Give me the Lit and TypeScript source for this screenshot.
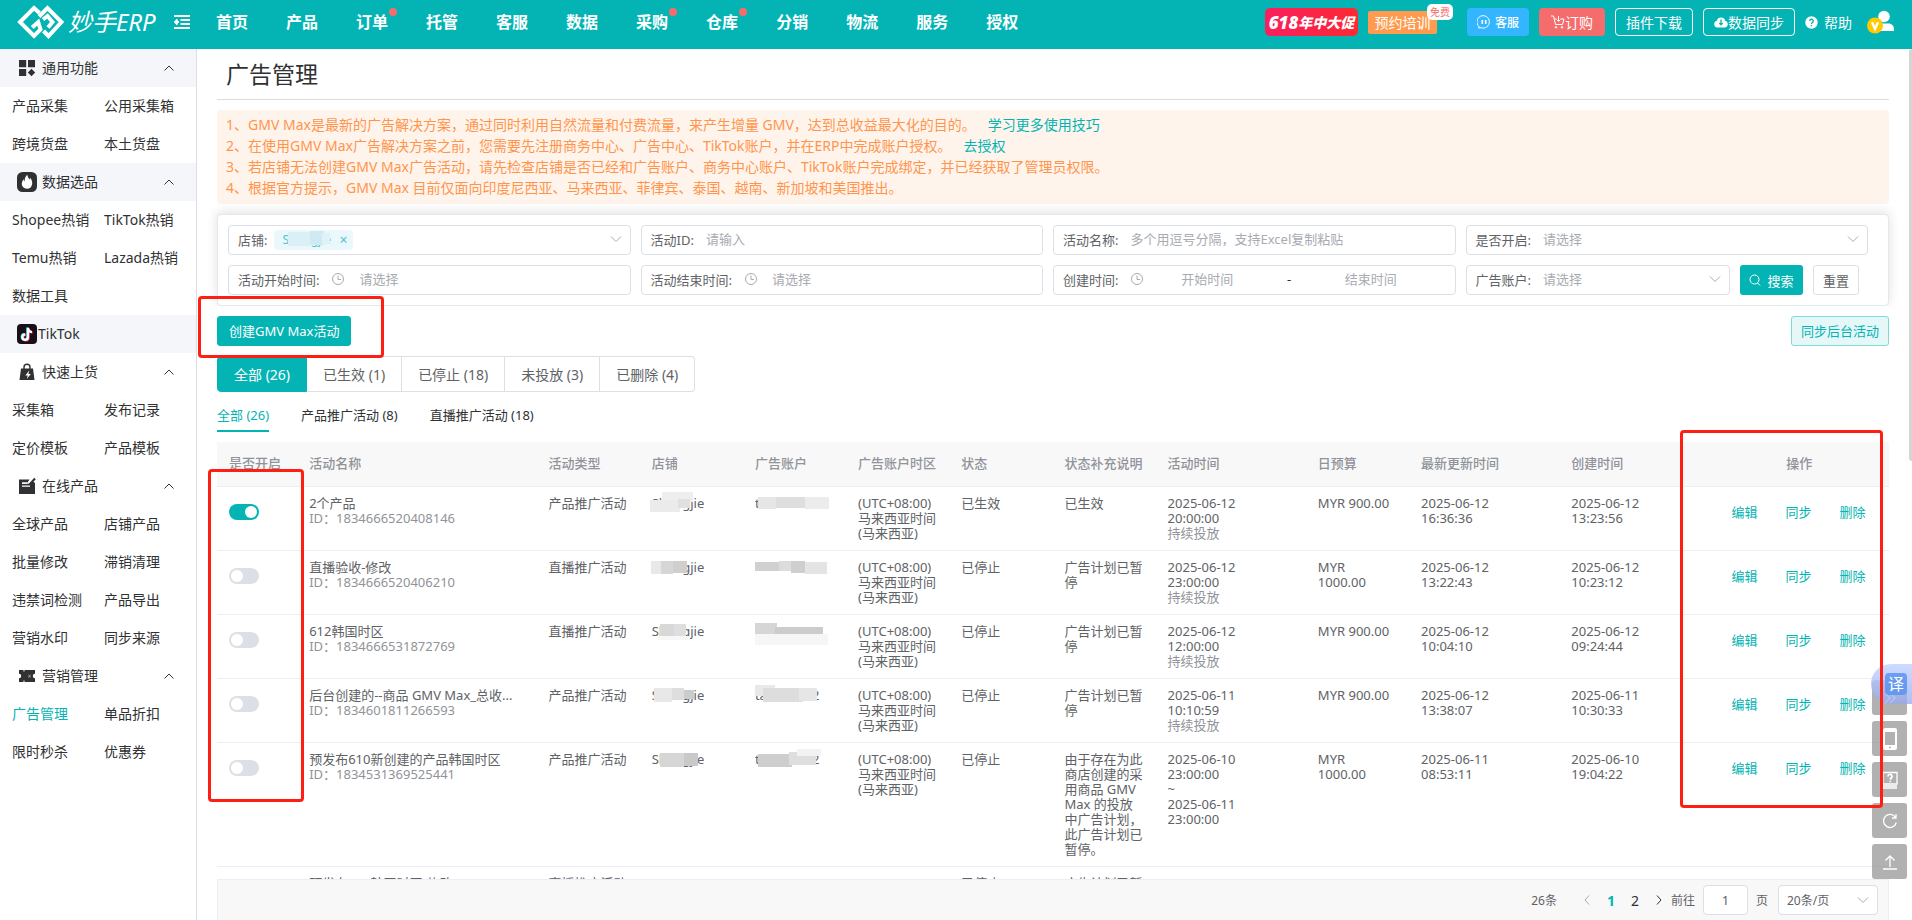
import { LitElement, html, css, svg, nothing } from "lit";
import { customElement, property } from "lit/decorators.js";

type Block = [number, number, number, number, string];

interface Row {
  on: boolean;
  name: string;
  id: string;
  type: string;
  shop: string;
  shopMask: Block[];
  account: string;
  accountMask: Block[];
  status: string;
  note: string;
  time: string;
  lasting: boolean;
  budget: string;
  updated: string;
  created: string;
}

const rows: Row[] = [
  {
    on: true, name: "2个产品", id: "1834666520408146", type: "产品推广活动",
    shop: "Shengjie",
    shopMask: [[10, 0, 31, 10, "#eeeeee"], [-2, 8, 30, 12, "#ebebeb"], [26, 7, 12, 9, "#e0e0e0"]],
    account: "t",
    accountMask: [[3, 5, 18, 12, "#e6e6e6"], [21, 5, 34, 11, "#dedede"], [50, 5, 24, 12, "#ececec"]],
    status: "已生效", note: "已生效", time: "2025-06-12\n20:00:00", lasting: true,
    budget: "MYR 900.00", updated: "2025-06-12\n16:36:36", created: "2025-06-12\n13:23:56",
  },
  {
    on: false, name: "直播验收-修改", id: "1834666520406210", type: "直播推广活动",
    shop: "Shengjie",
    shopMask: [[-1, 5, 10, 13, "#e8e8e8"], [9, 5, 12, 13, "#d6d6d6"], [21, 5, 14, 12, "#cfcfcf"]],
    account: "",
    accountMask: [[0, 6, 24, 9, "#d0d0d0"], [24, 5, 14, 10, "#dcdcdc"], [36, 5, 14, 12, "#cfcfcf"], [50, 6, 22, 12, "#e4e4e4"]],
    status: "已停止", note: "广告计划已暂停", time: "2025-06-12\n23:00:00", lasting: true,
    budget: "MYR\n1000.00", updated: "2025-06-12\n13:22:43", created: "2025-06-12\n10:23:12",
  },
  {
    on: false, name: "612韩国时区", id: "1834666531872769", type: "直播推广活动",
    shop: "Shengjie",
    shopMask: [[8, 4, 14, 13, "#d8d8d8"], [22, 4, 12, 13, "#dedede"], [6, 16, 32, 4, "#f7f7f7"]],
    account: "tan000002",
    accountMask: [[0, 3, 22, 11, "#d6d6d6"], [20, 7, 48, 8, "#cccccc"], [0, 14, 73, 11, "#f6f6f6"]],
    status: "已停止", note: "广告计划已暂停", time: "2025-06-12\n12:00:00", lasting: true,
    budget: "MYR 900.00", updated: "2025-06-12\n10:04:10", created: "2025-06-12\n09:24:44",
  },
  {
    on: false, name: "后台创建的--商品 GMV Max_总收...", id: "1834601811266593", type: "产品推广活动",
    shop: "Shengjie",
    shopMask: [[2, 4, 18, 14, "#e8e8e8"], [20, 4, 12, 12, "#dedede"], [32, 6, 10, 9, "#cccccc"]],
    account: "tan000002",
    accountMask: [[0, 1, 20, 11, "#e9e9e9"], [8, 4, 40, 14, "#dddddd"], [44, 4, 18, 13, "#e6e6e6"]],
    status: "已停止", note: "广告计划已暂停", time: "2025-06-11\n10:10:59", lasting: true,
    budget: "MYR 900.00", updated: "2025-06-12\n13:38:07", created: "2025-06-11\n10:30:33",
  },
  {
    on: false, name: "预发布610新创建的产品韩国时区", id: "1834531369525441", type: "产品推广活动",
    shop: "Shengjie",
    shopMask: [[8, 5, 24, 14, "#d6d6d6"], [32, 5, 14, 13, "#c9c9c9"]],
    account: "tan000002",
    accountMask: [[3, 6, 34, 13, "#cecece"], [34, 4, 27, 13, "#dedede"], [42, 1, 24, 7, "#f2f2f2"]],
    status: "已停止", note: "由于存在为此\n商店创建的采\n用商品 GMV\nMax 的投放\n中广告计划，\n此广告计划已\n暂停。",
    time: "2025-06-10\n23:00:00\n~\n2025-06-11\n23:00:00", lasting: false,
    budget: "MYR\n1000.00", updated: "2025-06-11\n08:53:11", created: "2025-06-10\n19:04:22",
  },
  {
    on: false, name: "预发布610韩国时区-修改", id: "1834531369525442", type: "直播推广活动",
    shop: "", shopMask: [], account: "", accountMask: [],
    status: "已停止", note: "广告计划已暂停", time: "", lasting: false,
    budget: "", updated: "", created: "",
  },
];

const chevronUp = html`<svg width="12" height="8" viewBox="0 0 12 8" fill="none" stroke="#333" stroke-width="1"><path d="M1.500 6.500L6 2l4.500 4.500" /></svg>`;
const chevronDown = html`<svg width="12" height="8" viewBox="0 0 12 8" fill="none" stroke="#a8abb2" stroke-width="1"><path d="M1 1.500L6 6.500l5-5" /></svg>`;
const clock = html`<svg width="14" height="14" viewBox="0 0 14 14" fill="none" stroke="#a8abb2"><circle cx="7" cy="7" r="5.500" /><path d="M7 3.500V7.500H10" /></svg>`;

const groupIcons: Record<string, unknown> = {
  grid: svg`<path fill="#303133" d="M2 2h7.200v7.200H2zM11 2h7v7.200h-7zM2 11h7.200v7H2zM14.500 10.800l3.700 3.700-3.700 3.700-3.700-3.700z"/>`,
  flame: svg`<rect width="20" height="20" rx="5.500" fill="#303133"/><path fill="#fff" d="M10.200 2.800c.4 2 1.400 3.200 2.200 4.600.5-.4.700-1 .700-1.700 1.700 2 2.300 4 2.100 6-.3 3-2.200 5-5.200 5s-5.200-2-5.200-4.900c0-1.900.9-3.300 1.900-4.500.1 1 .3 1.700.9 2.200C7.500 7 8.300 4.500 10.200 2.800z"/>`,
  tiktok: svg`<rect width="20" height="20" rx="4" fill="#1b0f18"/><g fill="none" stroke-width="2.200"><path stroke="#25f4ee" d="M10.300 3.500v9.300a2.800 2.800 0 1 1-2.800-2.800M10.300 4c.4 2.200 1.800 3.400 3.900 3.600"/><path stroke="#fe2c55" d="M11.700 4.300v9.300a2.800 2.800 0 1 1-2.800-2.800M11.700 5c.4 2.200 1.800 3.400 3.900 3.600"/><path stroke="#fff" d="M11 3.800v9.300a2.800 2.800 0 1 1-2.800-2.800M11 4.500c.4 2.200 1.800 3.400 3.900 3.600"/></g>`,
  bag: svg`<path fill="none" stroke="#303133" stroke-width="1.400" d="M7 8V5.200a3 3 0 0 1 6 0V8"/><path fill="#303133" d="M4 6.500h12L17.500 18h-15z"/><path fill="#fff" d="M12.300 8.500l-4 5h2.500l-1 3.500 4-5h-2.400z"/>`,
  note: svg`<path fill="#303133" d="M2 3.500h10.500l-2 3H5v1.200h8L15.500 5l2.500 2v11H2z"/><path stroke="#303133" stroke-width="2" d="M12.500 8.500L18 2.500"/><path stroke="#fff" stroke-width="1.200" d="M5 7.200h5M5 10.200h8"/>`,
  ticket: svg`<path fill="#303133" d="M2 4h4.500v1.500h1V4H18v3.800a2.200 2.200 0 0 0 0 4.400V16H7.500v-1.500h-1V16H2v-3.800a2.200 2.200 0 0 0 0-4.400z"/><path fill="#fff" d="M11 8l1.500 1.500L14 8l-.7 2 .7 2-1.500-1L11 12l.7-2z" opacity=".5"/>`,
};

interface Group { title: string; icon: string; shaded: boolean; open: boolean; items: string[] }

const groups: Group[] = [
  { title: "通用功能", icon: "grid", shaded: true, open: true, items: ["产品采集", "公用采集箱", "跨境货盘", "本土货盘"] },
  { title: "数据选品", icon: "flame", shaded: true, open: true, items: ["Shopee热销", "TikTok热销", "Temu热销", "Lazada热销", "数据工具"] },
  { title: "TikTok", icon: "tiktok", shaded: true, open: false, items: [] },
  { title: "快速上货", icon: "bag", shaded: false, open: true, items: ["采集箱", "发布记录", "定价模板", "产品模板"] },
  { title: "在线产品", icon: "note", shaded: false, open: true, items: ["全球产品", "店铺产品", "批量修改", "滞销清理", "违禁词检测", "产品导出", "营销水印", "同步来源"] },
  { title: "营销管理", icon: "ticket", shaded: false, open: true, items: ["广告管理", "单品折扣", "限时秒杀", "优惠券"] },
];

const base = css`
  * { box-sizing: border-box; }
  a { color: inherit; text-decoration: none; }
  button, input, select { font: inherit; color: inherit; margin: 0; }
  button { cursor: pointer; padding: 0; border: 0; background: none; }
  svg { display: block; flex: none; }
`;

@customElement("top-bar")
class TopBar extends LitElement {
  static styles = [base, css`
    :host { display: block; background: #04b4b4; color: #fff; }
    .bar { display: flex; align-items: center; height: 49px; padding: 0 17px 5px 17px; font-size: 14px; white-space: nowrap; }
    .logo { display: flex; align-items: center; gap: 4px; }
    .word { font-size: 24px; line-height: 34px; font-style: italic; width: 90px; }
    .fold { margin: 0 26px 0 16px; }
    nav { display: flex; gap: 38px; font-size: 16px; font-weight: 700; flex: 1; }
    nav a { position: relative; line-height: 24px; }
    .dot::after { content: ""; position: absolute; right: -9px; top: -2px; width: 8px; height: 8px; border-radius: 50%; background: #f56c6c; }
    .actions { display: flex; align-items: center; gap: 10px; }
    .btn { display: flex; align-items: center; justify-content: center; height: 28px; border-radius: 4px; color: #fff; }
    .sale { width: 93px; border-radius: 5px; background: linear-gradient(90deg, #fb1f5d, #fb2444 60%, #fd2a33); font-size: 14px; font-weight: 900; font-style: italic; }
    .sale b { font-size: 17px; font-weight: 900; }
    .train { position: relative; width: 69px; height: 23px; margin-right: 20px; border-radius: 2px; background: #ff9a4f; }
    .free { position: absolute; right: -16px; top: -7px; width: 26px; height: 16px; border-radius: 5px; background: #fff; color: #f56c6c; font-size: 10px; line-height: 16px; text-align: center; }
    .service { width: 62px; gap: 4px; background: #33b5ff; font-size: 12px; font-weight: 500; }
    .order { width: 66px; background: #f56c6c; }
    .line { padding: 0 10px; border: 1px solid #fff; }
    .help { display: flex; align-items: center; gap: 6px; }
    .user { margin-left: 5px; }
  `];

  render() {
    const items = ["首页", "产品", "订单", "托管", "客服", "数据", "采购", "仓库", "分销", "物流", "服务", "授权"];
    const dotted = ["订单", "采购", "仓库"];
    return html`<header class="bar">
      <a class="logo" href="#">
        <svg width="47" height="34" viewBox="0 0 47 34" fill="none" stroke="#fff" stroke-width="4">
          <path d="M22.500 8L17 3 3 17l14 14 6.500-6.500-2.300-7.500-6 5.500" />
          <path d="M26.500 26l5 5L44.500 17 30.500 3l-8.500 8.500M26 14.500l4.500-3.500 5 6-4.500 5.500" />
        </svg>
        <span class="word">妙手ERP</span>
      </a>
      <button class="fold" aria-label="收起菜单">
        <svg width="16" height="14" viewBox="0 0 16 14" stroke="#fff" stroke-width="1.800"><path d="M0 1h16M6.500 5h9.500M6.500 9h9.500M0 13h16M1 7h4M3.500 4.500L1 7l2.500 2.500" fill="none" /></svg>
      </button>
      <nav>${items.map((t) => html`<a href="#" class=${dotted.includes(t) ? "dot" : ""}>${t}</a>`)}</nav>
      <div class="actions">
        <button class="btn sale"><b>618</b>年中大促</button>
        <button class="btn train">预约培训<span class="free">免费</span></button>
        <button class="btn service">
          <svg width="14" height="14" viewBox="0 0 14 14" fill="none" stroke="#fff"><path d="M2 11.500A6.200 6.200 0 1 1 4 12.700L1.500 13z" /><path stroke-width="1.600" d="M5.300 5v4M8.700 5v4" /></svg>客服
        </button>
        <button class="btn order">
          <svg width="14" height="14" viewBox="0 0 14 14" fill="none" stroke="#fff"><path d="M0 1h2.500l2 8.500h7L13 4H9.500M3.500 4h2M7.500 1v5M5.500 4.500l2 2 2-2" /><circle cx="5" cy="12.300" r=".8" /><circle cx="11" cy="12.300" r=".8" /></svg>订购
        </button>
        <button class="btn line">插件下载</button>
        <button class="btn line">
          <svg width="14" height="14" viewBox="0 0 14 14"><path fill="#fff" d="M3.500 12.500a3.400 3.400 0 0 1-.7-6.700 4.300 4.300 0 0 1 8.400 0 3.400 3.400 0 0 1-.7 6.700z" /><path fill="none" stroke="#04b4b4" stroke-width="1.300" d="M7 4.500v5M5.300 8L7 9.800 8.700 8" /></svg>数据同步
        </button>
        <a class="help" href="#">
          <svg width="13" height="13" viewBox="0 0 13 13"><circle cx="6.500" cy="6.500" r="6.200" fill="#fff" /><path d="M4.700 5a1.800 1.800 0 1 1 2.500 1.700c-.5.300-.7.500-.7 1.200M6.500 9v1.300" fill="none" stroke="#04b4b4" stroke-width="1.300" /></svg>帮助
        </a>
        <button class="user" aria-label="用户">
          <svg width="28" height="24" viewBox="0 0 28 24"><circle cx="17" cy="6.500" r="5.800" fill="#fff" /><path d="M10 21v-2c0-4 3-5.500 6-5.500h5c3.500 0 6 2 6 5.500v2z" fill="#fff" /><circle cx="8" cy="15.500" r="8" fill="#ffc800" /><path d="M5 12.300l3 6.500 3-6.500" fill="none" stroke="#fff" stroke-width="2.400" /></svg>
        </button>
      </div>
    </header>`;
  }
}

@customElement("side-menu")
class SideMenu extends LitElement {
  static styles = [base, css`
    :host { display: block; border-right: 1px solid #dcdfe6; color: #303133; font-size: 14px; line-height: 38px; overflow: hidden; }
    .head { display: flex; align-items: center; width: 100%; height: 38px; padding: 0 21px 0 17px; text-align: left; }
    .shaded { background: #f5f6fa; }
    .label { flex: 1; margin-left: 5px; }
    .flush { margin-left: 1px; }
    .items { display: grid; grid-template-columns: 92px 1fr; padding-left: 12px; white-space: nowrap; }
    .current { color: #04b4b4; }
  `];

  render() {
    return html`<nav>${groups.map((g) => html`
      <button class="head ${g.shaded ? "shaded" : ""}">
        <svg width="20" height="20" viewBox="0 0 20 20">${groupIcons[g.icon]}</svg>
        <span class="label ${g.open ? "" : "flush"}">${g.title}</span>
        ${g.open ? chevronUp : nothing}
      </button>
      <div class="items">${g.items.map((t) => html`<a href="#" class=${t === "广告管理" ? "current" : ""}>${t}</a>`)}</div>`)}
    </nav>`;
  }
}

@customElement("masked-text")
class MaskedText extends LitElement {
  @property() text = "";
  @property({ attribute: false }) blocks: Block[] = [];

  static styles = [base, css`
    :host { display: block; position: relative; }
    svg { position: absolute; left: -4px; top: -4px; }
  `];

  render() {
    return html`${this.text}<svg width="84" height="26" viewBox="-4 0 84 26" aria-hidden="true">
      ${this.blocks.map(([x, y, w, h, c]) => svg`<rect x=${x} y=${y} width=${w} height=${h} fill=${c} />`)}
    </svg>`;
  }
}

@customElement("filter-panel")
class FilterPanel extends LitElement {
  static styles = [base, css`
    :host { display: block; border: 1px solid #e4e7ed; border-radius: 4px; padding: 10px 20px 10px 10px; box-shadow: 0 -2px 12px rgba(0, 0, 0, 0.12); background: #fff; font-size: 13px; color: #606266; }
    form { display: grid; grid-template-columns: repeat(4, 1fr); gap: 10px; }
    .field { display: flex; align-items: center; gap: 12px; height: 30px; min-width: 0; padding: 0 9px 2px 9px; border: 1px solid #dcdfe6; border-radius: 4px; white-space: nowrap; }
    .pick { padding-right: 6px; }
    .field > svg { margin-right: 2px; }
    input, select { flex: 1; min-width: 0; width: 0; height: 26px; padding: 0; border: 0; outline: 0; background: none; appearance: none; color: #a8abb2; }
    input::placeholder { color: #a8abb2; }
    .tag { display: flex; align-items: center; gap: 5px; height: 20px; margin: 2px 0 0 -5px; padding: 0 5px 0 8px; border-radius: 4px; background: #eaf8fb; color: #55c0d8; font-size: 12px; line-height: 20px; }
    .tag button { font-size: 14px; line-height: 20px; }
    .tag masked-text { width: 52px; }
    .range { padding-right: 28px; gap: 0; }
    .range > svg { margin: 0 7px 0 12px; }
    .range input { text-align: center; }
    .dash { width: 52px; text-align: center; color: #303133; }
    .last { display: flex; gap: 10px; padding-right: 9px; min-width: 0; }
    .last .field { flex: 1; }
    .search { display: flex; align-items: center; justify-content: center; gap: 6px; width: 63px; height: 30px; border-radius: 3px; background: #04b4b4; color: #fff; }
    .reset { width: 46px; height: 30px; border: 1px solid #dcdfe6; border-radius: 3px; }
  `];

  render() {
    const mask: Block[] = [[6, 6, 22, 14, "#daf0f6"], [28, 5, 14, 14, "#cfeaf2"], [40, 7, 8, 11, "#def2f7"]];
    return html`<form @submit=${(e: Event) => e.preventDefault()}>
      <label class="field pick">店铺:
        <span class="tag"><masked-text .text=${"Shengjie"} .blocks=${mask}></masked-text><button type="button" aria-label="移除">×</button></span>
        <select aria-label="店铺"><option></option></select>${chevronDown}
      </label>
      <label class="field">活动ID:<input placeholder="请输入" /></label>
      <label class="field">活动名称:<input placeholder="多个用逗号分隔，支持Excel复制粘贴" /></label>
      <label class="field pick">是否开启:<select><option>请选择</option></select>${chevronDown}</label>
      <label class="field">活动开始时间:${clock}<input placeholder="请选择" /></label>
      <label class="field">活动结束时间:${clock}<input placeholder="请选择" /></label>
      <label class="field range">创建时间:${clock}<input placeholder="开始时间" /><span class="dash">-</span><input placeholder="结束时间" aria-label="结束时间" /></label>
      <div class="last">
        <label class="field pick">广告账户:<select><option>请选择</option></select>${chevronDown}</label>
        <button class="search"><svg width="12" height="12" viewBox="0 0 12 12" fill="none" stroke="#fff"><circle cx="5.500" cy="5.500" r="4.500" /><path d="M8.500 9l2.500 2.500" /></svg>搜索</button>
        <button class="reset" type="reset">重置</button>
      </div>
    </form>`;
  }
}

@customElement("campaign-table")
class CampaignTable extends LitElement {
  static styles = [base, css`
    :host { display: block; overflow: hidden; min-height: 0; }
    table { width: 100%; table-layout: fixed; border-collapse: separate; border-spacing: 0; font-size: 13px; line-height: 15px; color: #606266; }
    th { height: 45px; padding: 0 12px 2px; background: #f8f8f8; border-bottom: 1px solid #ebeef5; color: #909399; font-weight: 500; text-align: left; white-space: nowrap; }
    td { padding: 9px 12px; border-bottom: 1px solid #ebeef5; vertical-align: top; white-space: pre-line; }
    .w-on { width: 80px; } .w-name { width: 239px; } .w-s { width: 103px; } .w-m { width: 150px; } .w-op { width: 179px; }
    .name { white-space: nowrap; overflow: hidden; text-overflow: ellipsis; }
    .mute { color: #909399; }
    .center { text-align: center; }
    .cell { display: flex; align-items: center; height: 32px; }
    .ops { gap: 28px; padding-left: 10px; color: #04b4b4; white-space: nowrap; }
    .switch { appearance: none; position: relative; width: 30px; height: 16px; border-radius: 8px; background: #dcdfe6; }
    .switch::before { content: ""; position: absolute; left: 2px; top: 2px; width: 12px; height: 12px; border-radius: 50%; background: #fff; }
    .switch:checked { background: #04b4b4; }
    .switch:checked::before { left: 16px; }
  `];

  render() {
    return html`<table>
      <colgroup>
        <col class="w-on" /><col class="w-name" /><col class="w-s" /><col class="w-s" /><col class="w-s" /><col class="w-s" /><col class="w-s" /><col class="w-s" />
        <col class="w-m" /><col class="w-s" /><col class="w-m" /><col class="w-m" /><col class="w-op" />
      </colgroup>
      <thead><tr>
        ${["是否开启", "活动名称", "活动类型", "店铺", "广告账户", "广告账户时区", "状态", "状态补充说明", "活动时间", "日预算", "最新更新时间", "创建时间"].map((t) => html`<th>${t}</th>`)}
        <th class="center">操作</th>
      </tr></thead>
      <tbody>${rows.map((r) => html`<tr>
        <td><div class="cell"><input class="switch" type="checkbox" aria-label=${"开启 " + r.name} .checked=${r.on} /></div></td>
        <td><div class="name">${r.name}</div><div class="mute">ID：${r.id}</div></td>
        <td>${r.type}</td>
        <td><masked-text .text=${r.shop} .blocks=${r.shopMask}></masked-text></td>
        <td><masked-text .text=${r.account} .blocks=${r.accountMask}></masked-text></td>
        <td>${"(UTC+08:00)\n马来西亚时间\n(马来西亚)"}</td>
        <td>${r.status}</td>
        <td>${r.note}</td>
        <td>${r.time}${r.lasting ? html`<div class="mute">持续投放</div>` : nothing}</td>
        <td>${r.budget}</td>
        <td>${r.updated}</td>
        <td>${r.created}</td>
        <td><div class="cell ops"><a href="#">编辑</a><a href="#">同步</a><a href="#">删除</a></div></td>
      </tr>`)}</tbody>
    </table>`;
  }
}

@customElement("float-tools")
class FloatTools extends LitElement {
  static styles = [base, css`
    :host { display: flex; flex-direction: column; gap: 6px; align-items: flex-start; }
    .tool { display: flex; align-items: center; justify-content: center; width: 35px; height: 35px; border-radius: 3px; background: rgba(144, 144, 144, 0.7); }
    .translate { position: absolute; right: -5px; top: -16px; width: 41px; height: 40px; padding-left: 14px; border-radius: 20px 0 0 20px; background: linear-gradient(rgba(196, 213, 255, 0.85), rgba(150, 168, 240, 0.75)); color: #fff; }
    .badge { display: block; width: 22px; height: 22px; border-radius: 4px; background: rgba(91, 148, 240, 0.85); font-size: 16px; line-height: 22px; text-align: center; }
  `];

  render() {
    return html`
      <button class="tool" aria-label="展开"><svg width="12" height="12" viewBox="0 0 12 12" fill="none" stroke="#fff" stroke-width="1.300"><path d="M1 1l5 5-5 5M6 1l5 5-5 5" /></svg></button>
      <button class="tool" aria-label="手机版"><svg width="16" height="24" viewBox="0 0 16 24"><path fill="#fff" fill-rule="evenodd" d="M3 1h10a2 2 0 0 1 2 2v18a2 2 0 0 1-2 2H3a2 2 0 0 1-2-2V3a2 2 0 0 1 2-2zm0 4v13h10V5zm5 14.500a1 1 0 1 0 0 2 1 1 0 0 0 0-2z" /></svg></button>
      <button class="tool" aria-label="帮助手册"><svg width="16" height="18" viewBox="0 0 16 18" fill="none" stroke="#fff" stroke-width="1.300"><path d="M1 17V1.500h14V13H1M1 15h14M1 17h14" /><path stroke-width="1.700" d="M6 5.500a2 2 0 1 1 2.500 1.900V8.800M8.300 9.700v1.500" /></svg></button>
      <button class="tool" aria-label="刷新"><svg width="16" height="16" viewBox="0 0 16 16" fill="none" stroke="#fff" stroke-width="1.300"><path d="M14.300 9.500A6.500 6.500 0 1 1 13.500 4.500M14 1v4h-4" /></svg></button>
      <button class="tool" aria-label="回到顶部"><svg width="16" height="16" viewBox="0 0 16 16" fill="none" stroke="#fff" stroke-width="1.300"><path d="M1 15h14M8 13V2M3.500 6.500L8 2l4.500 4.500" /></svg></button>
      <button class="translate" aria-label="翻译"><span class="badge">译</span></button>`;
  }
}

@customElement("app-root")
class AppRoot extends LitElement {
  static styles = [base, css`
    :host { display: flex; flex-direction: column; position: relative; height: 100vh; overflow: hidden; background: #fff; font-family: "Noto Sans", "Noto Sans CJK SC", sans-serif; font-size: 13px; color: #303133; }
    .body { flex: 1; min-height: 0; display: grid; grid-template-columns: 197px 1fr; }
    main { display: flex; flex-direction: column; min-width: 0; min-height: 0; padding: 0 23px 0 20px; }
    h1 { margin: 0; padding-left: 9px; border-bottom: 1px solid #dcdcdc; font-size: 23px; line-height: 50px; font-weight: 400; }
    .notice { margin: 10px 0; padding: 4px 9px 6px; border-radius: 4px; background: #fff4eb; color: #ff954d; font-size: 14px; line-height: 21px; }
    .notice p { margin: 0; }
    .notice a { margin-left: 12px; color: #04b4b4; }
    .bar { display: flex; justify-content: space-between; padding: 10px 0; background: #fff; position: relative; }
    .bar button { height: 30px; padding: 0 9px 1px; border-radius: 3px; border: 1px solid #81dada; background: #e5f7f7; color: #04b4b4; }
    .bar .create { padding: 0 11px 1px; border-color: #04b4b4; background: #04b4b4; color: #fff; }
    .tabs { display: flex; font-size: 14px; color: #606266; }
    .tabs button { height: 36px; padding: 0 16px 1px; border: 1px solid #dcdfe6; border-left: 0; }
    .tabs button:first-child { border: 1px solid #04b4b4; border-radius: 4px 0 0 4px; background: #04b4b4; color: #fff; }
    .tabs button:last-child { border-radius: 0 4px 4px 0; }
    .subtabs { display: flex; gap: 32px; margin: 10px 0; }
    .subtabs button { height: 30px; padding-bottom: 3px; border-bottom: 2px solid transparent; }
    .subtabs .active { border-color: #04b4b4; color: #04b4b4; }
    campaign-table { flex: 1; }
    .pager { display: flex; align-items: center; justify-content: flex-end; padding: 5px 10px; border: 1px solid #ebeef5; border-bottom: 0; background: #f8f8f8; font-size: 12px; color: #606266; }
    .pages { display: flex; align-items: center; gap: 16px; margin: 0 8px 0 26px; font-size: 14px; color: #303133; }
    .pages .active { color: #04b4b4; font-weight: 700; }
    .pager label { display: flex; align-items: center; gap: 8px; }
    .pager input { width: 45px; height: 30px; border: 1px solid #dcdfe6; border-radius: 4px; background: #fff; text-align: center; font-size: 13px; }
    .size { position: relative; margin-left: 10px; }
    .size select { width: 100px; height: 30px; padding: 0 8px; border: 1px solid #dcdfe6; border-radius: 4px; background: #fff; appearance: none; }
    .size svg { position: absolute; right: 9px; top: 11px; }
    .scroll { position: absolute; right: 0; top: 49px; width: 3px; height: 412px; border-radius: 3px 0 0 3px; background: #d5d5d5; }
    float-tools { position: absolute; right: 5px; bottom: 41px; }
    .mark { position: absolute; border: 3px solid #ff1e12; border-radius: 4px; pointer-events: none; }
    .mark-create { left: 198px; top: 296px; width: 186px; height: 62px; }
    .mark-switch { left: 208px; top: 469px; width: 96px; height: 333px; }
    .mark-ops { right: 29px; top: 430px; width: 203px; height: 378px; }
  `];

  render() {
    return html`
      <top-bar></top-bar>
      <div class="body">
        <side-menu></side-menu>
        <main>
          <h1>广告管理</h1>
          <section class="notice">
            <p>1、GMV Max是最新的广告解决方案，通过同时利用自然流量和付费流量，来产生增量 GMV，达到总收益最大化的目的。<a href="#">学习更多使用技巧</a></p>
            <p>2、在使用GMV Max广告解决方案之前，您需要先注册商务中心、广告中心、TikTok账户，并在ERP中完成账户授权。<a href="#">去授权</a></p>
            <p>3、若店铺无法创建GMV Max广告活动，请先检查店铺是否已经和广告账户、商务中心账户、TikTok账户完成绑定，并已经获取了管理员权限。</p>
            <p>4、根据官方提示，GMV Max 目前仅面向印度尼西亚、马来西亚、菲律宾、泰国、越南、新加坡和美国推出。</p>
          </section>
          <filter-panel></filter-panel>
          <div class="bar"><button class="create">创建GMV Max活动</button><button>同步后台活动</button></div>
          <div class="tabs">${["全部 (26)", "已生效 (1)", "已停止 (18)", "未投放 (3)", "已删除 (4)"].map((t) => html`<button>${t}</button>`)}</div>
          <div class="subtabs">${["全部 (26)", "产品推广活动 (8)", "直播推广活动 (18)"].map((t, i) => html`<button class=${i ? "" : "active"}>${t}</button>`)}</div>
          <campaign-table></campaign-table>
          <div class="pager">
            <span>26条</span>
            <div class="pages">
              <button aria-label="上一页"><svg width="8" height="12" viewBox="0 0 8 12" fill="none" stroke="#a8abb2"><path d="M6 1.500L2 6l4 4.500" /></svg></button>
              <button class="active">1</button><button>2</button>
              <button aria-label="下一页"><svg width="8" height="12" viewBox="0 0 8 12" fill="none" stroke="#303133"><path d="M2 1.500L6 6l-4 4.500" /></svg></button>
            </div>
            <label>前往<input value="1" />页</label>
            <div class="size"><select aria-label="每页条数"><option>20条/页</option></select>${chevronDown}</div>
          </div>
        </main>
      </div>
      <div class="scroll"></div>
      <float-tools></float-tools>
      <div class="mark mark-create"></div>
      <div class="mark mark-switch"></div>
      <div class="mark mark-ops"></div>`;
  }
}
